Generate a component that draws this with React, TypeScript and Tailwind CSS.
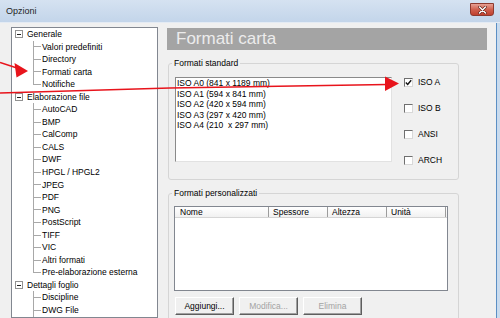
import type { ReactElement } from "react"

const tree = [
  { label: "Generale", children: ["Valori predefiniti", "Directory", "Formati carta", "Notifiche"], clipped: false },
  {
    label: "Elaborazione file",
    children: [
      "AutoCAD", "BMP", "CalComp", "CALS", "DWF", "HPGL / HPGL2", "JPEG", "PDF", "PNG",
      "PostScript", "TIFF", "VIC", "Altri formati", "Pre-elaborazione esterna",
    ],
    clipped: false,
  },
  { label: "Dettagli foglio", children: ["Discipline", "DWG File"], clipped: true },
]

const standard = [
  "ISO A0 (841 x 1189 mm)",
  "ISO A1 (594 x 841 mm)",
  "ISO A2 (420 x 594 mm)",
  "ISO A3 (297 x 420 mm)",
  "ISO A4 (210  x 297 mm)",
]

const families = [
  { name: "ISO A", checked: true },
  { name: "ISO B", checked: false },
  { name: "ANSI", checked: false },
  { name: "ARCH", checked: false },
]

function TreeGroup({ label, children, clipped }: { label: string; children: string[]; clipped: boolean }) {
  return (
    <>
      <div className="flex h-[12.55px] items-center pl-[3px]">
        <span className="flex h-[8px] w-[8px] items-center justify-center border border-[#929292] bg-white">
          <span className="h-px w-[4px] bg-[#222]" />
        </span>
        <span className="ml-[4px] whitespace-nowrap">{label}</span>
      </div>
      {children.map((c, i) => {
        const last = i === children.length - 1 && !clipped
        return (
          <div key={c} className="flex h-[12.55px]">
            <div className="ml-[21px] flex w-[8px] flex-col">
              <div className="flex-1 border-b border-l border-[#a8a8a8]" />
              <div className={last ? "flex-1" : "flex-1 border-l border-[#a8a8a8]"} />
            </div>
            <span className="ml-[1px] self-center whitespace-nowrap">{c}</span>
          </div>
        )
      })}
    </>
  )
}

function Check({ checked }: { checked: boolean }) {
  return (
    <span className="flex h-[9px] w-[9px] items-center justify-center border border-[#6f6f6f] border-b-[#d8d8d8] border-r-[#d8d8d8] bg-white">
      {checked && (
        <svg width="7" height="7" viewBox="0 0 7 7">
          <path d="M0.8 3.4 L2.7 5.4 L6.2 1.2" fill="none" stroke="#111" strokeWidth="1.4" />
        </svg>
      )}
    </span>
  )
}

function WinButton({ label, disabled }: { label: string; disabled?: boolean }) {
  return (
    <div
      className={`flex h-[18px] w-[59px] items-center justify-center border border-b-[#5e5e5e] border-l-white border-r-[#5e5e5e] border-t-white bg-[#f0f0f0] shadow-[inset_-1px_-1px_0_#a0a0a0] ${
        disabled ? "text-[#a3a3a3]" : "text-black"
      }`}
    >
      {label}
    </div>
  )
}

export default function App(): ReactElement {
  return (
    <div className="relative h-[318px] w-[500px] overflow-hidden bg-[#f0f0f0] font-['Liberation_Sans',Arial,sans-serif] text-[8.5px] text-black">
      {/* title bar */}
      <div className="flex h-[23px] items-start border-b border-[#e4ebf4] bg-gradient-to-b from-[#d5e2f1] to-[#c3d5ea]">
        <span className="ml-[6px] mt-[5px] text-[9px] leading-[12px] text-[#1e1e1e]">Opzioni</span>
        <div className="ml-auto mr-[6px] mt-[3px] flex h-[13px] w-[24px] items-center justify-center rounded-b-[3px] border border-[#8d3a2f] bg-gradient-to-b from-[#e6a094] via-[#d0604e] to-[#c0402e]">
          <svg width="9" height="8" viewBox="0 0 9 8">
            <path d="M1.5 1 L7.5 7 M7.5 1 L1.5 7" stroke="#5a1a12" strokeWidth="2.6" strokeLinecap="round" />
            <path d="M1.5 1 L7.5 7 M7.5 1 L1.5 7" stroke="#ffffff" strokeWidth="1.5" strokeLinecap="round" />
          </svg>
        </div>
      </div>

      <div className="flex h-[295px]">
        {/* tree */}
        <div className="ml-[11px] mt-[4px] w-[147px] overflow-hidden border border-[#828790] bg-white leading-[12.55px]">
          {tree.map((g) => (
            <TreeGroup key={g.label} label={g.label} children={g.children} clipped={g.clipped} />
          ))}
        </div>

        {/* page */}
        <div className="ml-[9px] mt-[5px] flex w-[320px] flex-col">
          <div className="h-[22px] bg-[#a4a4a4] pl-[9px] text-[17px] leading-[22px] text-[#ececec]">Formati carta</div>

          <fieldset className="ml-[1px] mt-[7px] w-[291px] rounded-[3px] border border-[#d5d5d5] px-[6px] pb-[14px] pt-[8px]">
            <legend className="-ml-[3px] px-[2px] leading-[12px]">Formati standard</legend>
            <div className="flex">
              <div className="h-[85px] w-[217px] border border-[#8a8a8a] border-b-[#e2e2e2] border-r-[#e2e2e2] bg-white pl-[1px] leading-[10.5px]">
                {standard.map((s) => (
                  <div key={s} className="whitespace-pre">{s}</div>
                ))}
              </div>
              <div className="ml-[12px] flex flex-col gap-[16px]">
                {families.map((f) => (
                  <div key={f.name} className="flex h-[10px] items-center">
                    <Check checked={f.checked} />
                    <span className="ml-[5px]">{f.name}</span>
                  </div>
                ))}
              </div>
            </div>
          </fieldset>

          <fieldset className="ml-[1px] mt-[7px] w-[291px] rounded-[3px] border border-[#d5d5d5] px-[5px] pb-[20px] pt-[7px]">
            <legend className="-ml-[2px] px-[2px] leading-[12px]">Formati personalizzati</legend>
            <div className="w-[274px] border border-[#828790] bg-white">
              <div className="flex h-[11px] border-b border-[#d5d5d5] bg-gradient-to-b from-white to-[#f1f1f1] leading-[11px]">
                <div className="w-[94px] border-r border-[#9c9c9c] pl-[5px]">Nome</div>
                <div className="w-[59px] border-r border-[#9c9c9c] pl-[4px]">Spessore</div>
                <div className="w-[59px] border-r border-[#9c9c9c] pl-[4px]">Altezza</div>
                <div className="w-[59px] border-r border-[#9c9c9c] pl-[4px]">Unità</div>
              </div>
              <div className="h-[72px]" />
            </div>
            <div className="ml-[1px] mt-[6px] flex gap-[5px]">
              <WinButton label="Aggiungi..." />
              <WinButton label="Modifica..." disabled />
              <WinButton label="Elimina" disabled />
            </div>
          </fieldset>
        </div>

        <div className="ml-auto w-[4px] border-l border-[#5b8fc4] bg-[#c9dbee]" />
      </div>

      {/* red annotation arrows */}
      <svg className="pointer-events-none absolute left-0 top-0" width="500" height="318" viewBox="0 0 500 318">
        <path d="M0 62.5 L17 68" stroke="#e8141c" strokeWidth="1.6" fill="none" />
        <polygon points="28,71 14.5,63 16.5,77.5" fill="#e8141c" />
        <path d="M0 93 L170 88 L387 84.5" stroke="#e8141c" strokeWidth="1.6" fill="none" />
        <polygon points="399,83.5 385,76.5 385,91" fill="#e8141c" />
      </svg>
    </div>
  )
}
